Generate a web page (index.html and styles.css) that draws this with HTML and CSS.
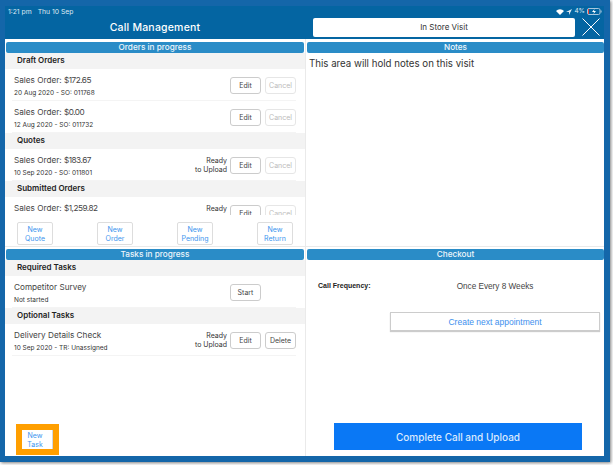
FILE: index.html
```html
<!DOCTYPE html>
<html lang="en">
<head>
  <meta charset="UTF-8">
  <title>Call Management</title>
  <link rel="stylesheet" href="styles.css">
</head>
<body>
  <div class="frame">
    <div class="screen">
      <div class="status">
        <span class="status-left"><span>1:21 pm</span><span>Thu 10 Sep</span></span>
        <span class="status-right">
          <svg width="8" height="6" viewBox="0 0 8 6"><path d="M0 2 A5.5 5.5 0 0 1 8 2 L4 6 Z" fill="#fff"/></svg>
          <svg width="6" height="6" viewBox="0 0 6 6"><path d="M6 0 L0 3 L3 3 L3 6 Z" fill="#dfeaf3"/></svg>
          <span>4%</span>
          <svg width="15" height="7" viewBox="0 0 15 7"><rect x=".5" y=".5" width="12.5" height="6" rx="1.5" fill="none" stroke="#a9c6dc"/><rect x="1" y="1" width="1" height="5" fill="#e8443a"/><path d="M7.5 1 L5 4 L7 4 L6.5 6 L9 3 L7 3 Z" fill="#fff"/><rect x="13.6" y="2.5" width="1" height="2" fill="#a9c6dc"/></svg>
        </span>
      </div>
      <header class="topbar">
        <div class="topbar-title">Call Management</div>
        <div class="visit-type">In Store Visit</div>
        <svg class="close" width="18" height="18" viewBox="0 0 18 18"><path d="M.5 .5 L17.5 17.5 M17.5 .5 L.5 17.5" stroke="#fff" stroke-width="1" fill="none"/></svg>
      </header>

      <div class="panels">
        <section class="panel">
          <h2 class="panel-title">Orders in progress</h2>
          <div class="list">
            <h3 class="group">Draft Orders</h3>
            <div class="row">
              <div class="row-text"><div class="name">Sales Order: <span class="amount">$172.65</span></div><div class="sub">20 Aug 2020 - SO: 011768</div></div>
              <button class="btn">Edit</button><button class="btn off">Cancel</button>
            </div>
            <div class="row">
              <div class="row-text"><div class="name">Sales Order: <span class="amount">$0.00</span></div><div class="sub">12 Aug 2020 - SO: 011732</div></div>
              <button class="btn">Edit</button><button class="btn off">Cancel</button>
            </div>
            <h3 class="group">Quotes</h3>
            <div class="row">
              <div class="row-text"><div class="name">Sales Order: <span class="amount">$183.67</span></div><div class="sub">10 Sep 2020 - SO: 011801</div></div>
              <div class="ready">Ready<br>to Upload</div>
              <button class="btn">Edit</button><button class="btn off">Cancel</button>
            </div>
            <h3 class="group">Submitted Orders</h3>
            <div class="row">
              <div class="row-text"><div class="name">Sales Order: <span class="amount">$1,259.82</span></div><div class="sub">&nbsp;</div></div>
              <div class="ready">Ready<br>&nbsp;</div>
              <button class="btn">Edit</button><button class="btn off">Cancel</button>
            </div>
          </div>
          <div class="new-row">
            <button class="new">New<br>Quote</button>
            <button class="new">New<br>Order</button>
            <button class="new">New<br>Pending</button>
            <button class="new">New<br>Return</button>
          </div>
        </section>

        <section class="panel">
          <h2 class="panel-title right">Notes</h2>
          <p class="notes">This area will hold notes on this visit</p>
        </section>

        <section class="panel lower">
          <h2 class="panel-title">Tasks in progress</h2>
          <div class="list">
            <h3 class="group">Required Tasks</h3>
            <div class="row">
              <div class="row-text"><div class="name">Competitor Survey</div><div class="sub">Not started</div></div>
              <button class="btn">Start</button><span class="btn-gap"></span>
            </div>
            <h3 class="group">Optional Tasks</h3>
            <div class="row">
              <div class="row-text"><div class="name">Delivery Details Check</div><div class="sub">10 Sep 2020 - TR: Unassigned</div></div>
              <div class="ready">Ready<br>to Upload</div>
              <button class="btn">Edit</button><button class="btn">Delete</button>
            </div>
          </div>
          <div class="task-foot">
            <div class="highlight"><button class="new flat">New<br>Task</button></div>
          </div>
        </section>

        <section class="panel lower">
          <h2 class="panel-title right">Checkout</h2>
          <div class="checkout">
            <div class="freq"><span class="freq-label">Call Frequency:</span><span class="freq-value">Once Every 8 Weeks</span></div>
            <button class="next">Create next appointment</button>
            <button class="complete">Complete Call and Upload</button>
          </div>
        </section>
      </div>
    </div>
  </div>
</body>
</html>
```

FILE: styles.css
```css
* {
  box-sizing: border-box;
}
body {
  margin: 0;
  width: 613px;
  height: 465px;
  overflow: hidden;
  background: #fff;
  font-family: Inter, 'Liberation Sans', sans-serif;
  color: #333;
}
button {
  font-family: inherit;
  padding: 0;
}
.frame {
  width: 610px;
  height: 462px;
  padding: 6px 6px 6px 5px;
  background: #1466a9;
  box-shadow: 1px 1px 3px rgba(0,0,0,0.5);
}
.screen {
  height: 450px;
  display: flex;
  flex-direction: column;
  background: #eaeaea;
}
.status {
  height: 11px;
  flex: none;
  background: #0465a2;
  color: #dfeaf3;
  font-size: 6.8px;
  line-height: 11px;
  padding: 0 2px 0 3px;
  display: flex;
  justify-content: space-between;
}
.status-left {
  display: flex;
  gap: 6px;
}
.status-right {
  display: flex;
  align-items: center;
  gap: 2px;
  font-size: 6.5px;
}
.topbar {
  height: 22px;
  flex: none;
  background: #0465a2;
  display: flex;
  align-items: center;
  padding: 0 4px 2px 0;
}
.topbar-title {
  width: 300px;
  text-align: center;
  color: #fff;
  font-size: 10.5px;
  font-weight: 500;
  letter-spacing: 0.2px;
}
.visit-type {
  width: 262px;
  height: 19px;
  margin-left: 8px;
  background: #fff;
  border-radius: 2px;
  text-align: center;
  font-size: 8px;
  line-height: 19px;
}
.close {
  margin-left: 7px;
}
.panels {
  flex: 1;
  display: grid;
  grid-template-columns: 300px 298px;
  grid-template-rows: 207px 1fr;
  gap: 1px;
  min-height: 0;
}
.panel {
  background: #fff;
  display: flex;
  flex-direction: column;
  min-height: 0;
  overflow: hidden;
  padding-top: 3px;
}
.panel.lower {
  padding-top: 2px;
}
.panel-title {
  flex: none;
  margin: 0 1px;
  height: 11px;
  background: #2a8cc7;
  border-radius: 2px;
  color: #eef6fb;
  font-size: 8.2px;
  font-weight: 500;
  line-height: 11px;
  text-align: center;
}
.panel-title.right {
  margin-right: 0;
}
.list {
  flex: 1;
  min-height: 0;
  overflow: hidden;
}
.group {
  margin: 0;
  height: 16px;
  background: #f3f3f3;
  color: #222;
  font-size: 8px;
  font-weight: 600;
  line-height: 15px;
  padding-left: 12px;
}
.row {
  height: 32px;
  display: flex;
  align-items: center;
  gap: 4px;
  margin: 0 9px 0 7px;
  padding: 2px 0 0 2px;
  border-bottom: 1px solid #f4f4f4;
}
.row-text {
  flex: 1;
  padding-top: 2px;
}
.name {
  font-size: 8.2px;
  color: #444;
  line-height: 13px;
}
.amount {
  letter-spacing: -0.5px;
}
.sub {
  font-size: 6.5px;
  color: #333;
  line-height: 12px;
}
.ready {
  font-size: 7px;
  line-height: 8.5px;
  text-align: right;
  color: #333;
  margin-right: -1px;
}
.btn {
  width: 31px;
  height: 17px;
  background: #fff;
  border: 1px solid #ccc;
  border-radius: 3px;
  color: #444;
  font-size: 7px;
}
.btn.off {
  color: #bbb;
  border-color: #e6e6e6;
}
.btn-gap {
  width: 31px;
}
.new-row {
  flex: none;
  height: 31px;
  display: flex;
  justify-content: space-between;
  padding: 7px 12px 0;
  background: #fff;
}
.new {
  width: 36px;
  height: 23px;
  background: #fff;
  border: 1px solid #ddd;
  border-radius: 2px;
  color: #3d95ee;
  font-size: 7px;
  line-height: 9px;
}
.task-foot {
  flex: none;
  padding: 0 0 1px 11px;
}
.highlight {
  display: inline-block;
  padding: 6px;
  background: #ff9f00;
  line-height: 0;
}
.new.flat {
  width: 31px;
  height: 19px;
  padding-right: 4px;
  border: none;
  border-right: 1px solid #cfd8e3;
  border-radius: 0;
}
.notes {
  margin: 5px 3px;
  font-size: 9.7px;
  color: #333;
}
.checkout {
  flex: 1;
  display: flex;
  flex-direction: column;
  font-family: 'Liberation Sans', Arial, sans-serif;
}
.freq {
  display: flex;
  margin-top: 20px;
  align-items: center;
  font-size: 8.2px;
  height: 12px;
}
.freq-label {
  width: 100px;
  padding-left: 12px;
  margin-top: -1px;
  font-size: 7px;
  font-weight: 700;
  color: #222;
}
.freq-value {
  width: 160px;
  text-align: center;
  margin-left: 9px;
  color: #444;
}
.next {
  align-self: flex-end;
  width: 210px;
  height: 19px;
  margin: 20px 4px 0 0;
  background: #fff;
  border: 1px solid #ccc;
  box-shadow: 0 1px 1px rgba(0,0,0,0.2);
  color: #3d8fee;
  font-family: inherit;
  font-size: 8.5px;
}
.complete {
  margin: auto 22px 6px 28px;
  height: 27px;
  background: #0a78f5;
  border: none;
  color: #dbeafe;
  font-family: Inter, sans-serif;
  font-size: 10px;
  font-weight: 500;
}
```
